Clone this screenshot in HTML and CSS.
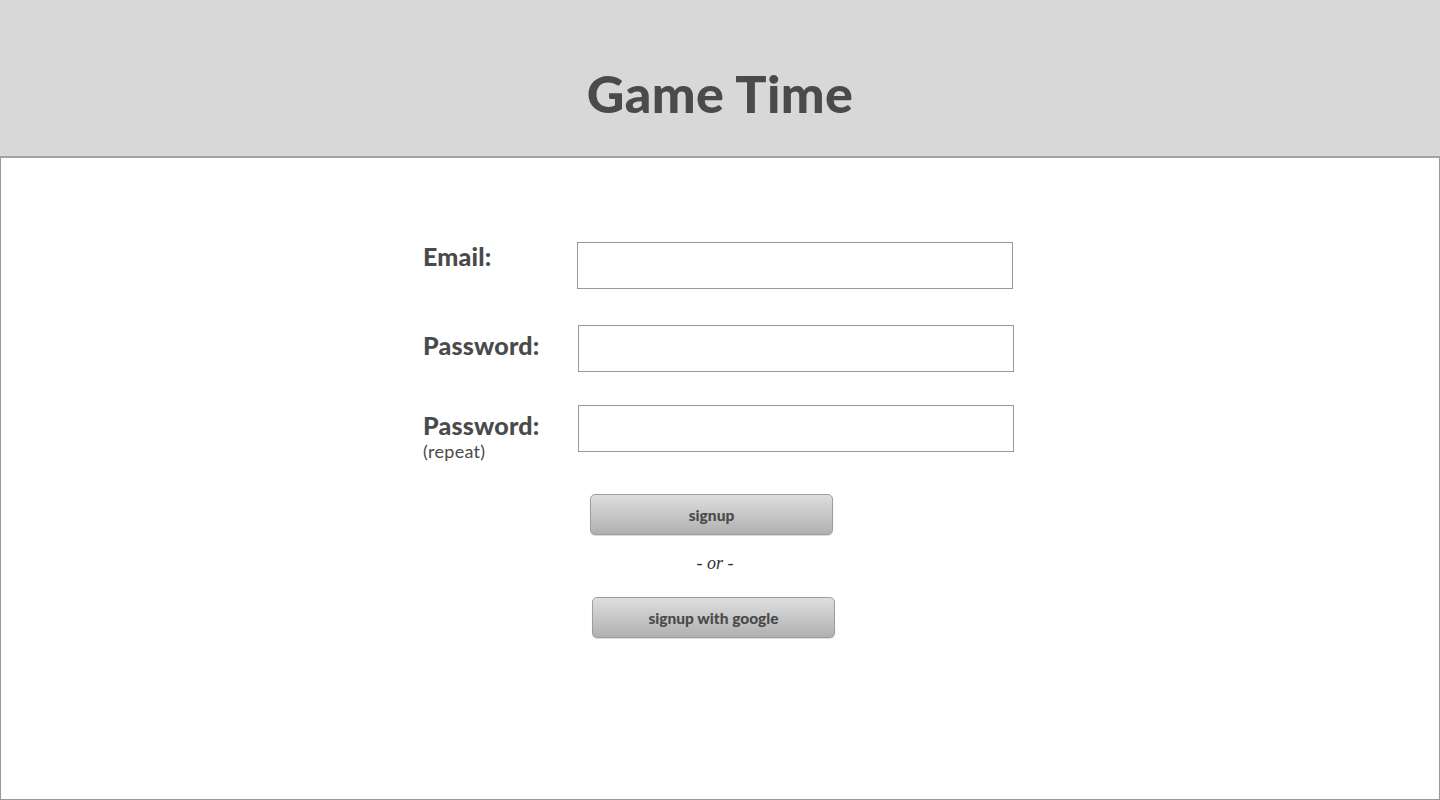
FILE: index.html
```html
<!DOCTYPE html>
<html>
<head>
<meta charset="utf-8">
<title>Game Time</title>
<link rel="stylesheet" href="styles.css">
</head>
<body>
<header class="header">
  <h1 class="title">Game Time</h1>
</header>
<main class="main">
  <form class="form">
    <div class="row row-email">
      <label class="label">Email:</label>
      <input class="field field-email" type="text">
    </div>
    <div class="row row-pass">
      <label class="label">Password:</label>
      <input class="field" type="password">
    </div>
    <div class="row row-repeat">
      <label class="label">Password:<span class="sub">(repeat)</span></label>
      <input class="field" type="password">
    </div>
    <div class="actions">
      <button type="button" class="btn btn-signup">signup</button>
      <div class="or">- or -</div>
      <button type="button" class="btn btn-google">signup with google</button>
    </div>
  </form>
</main>
</body>
</html>
```
FILE: styles.css
```css
html, body {
  margin: 0;
  padding: 0;
  background: #fff;
}
body {
  font-family: Lato, "Noto Sans", sans-serif;
  color: #4a4a4a;
}
.header {
  background: #d8d8d8;
  border-bottom: 2px solid #a3a3a3;
  display: flex;
  align-items: center;
  justify-content: center;
  box-sizing: border-box;
  height: 158px;
  padding-top: 30px;
}
.title {
  margin: 0;
  font-size: 52px;
  font-weight: 900;
  color: #4a4a4a;
  letter-spacing: 0.4px;
}
.main {
  height: 642px;
  box-sizing: border-box;
  border: 1px solid #999;
  border-top: none;
  padding-top: 84px;
}
.form {
  width: 594px;
  margin: 0 auto;
}
.row {
  display: flex;
  align-items: flex-start;
}
.label {
  width: 155px;
  font-size: 25px;
  font-weight: 900;
  color: #4a4a4a;
  display: flex;
  flex-direction: column;
  line-height: 28px;
  letter-spacing: 0.2px;
}
.row-email .label { padding-top: 0; width: 154px; }
.row-pass { margin-top: 36px; }
.row-pass .label { padding-top: 6px; }
.row-repeat { margin-top: 33px; }
.row-repeat .label { padding-top: 6px; }
.sub {
  font-size: 18px;
  font-weight: 400;
  line-height: 20px;
  margin-top: 2px;
  letter-spacing: 0.3px;
  color: #4a4a4a;
}
.field {
  width: 436px;
  height: 47px;
  box-sizing: border-box;
  border: 1px solid #999;
  background: #fff;
  margin: 0;
  padding: 0 8px;
  font-size: 16px;
  outline: none;
}
.actions {
  margin-top: 33px;
  display: flex;
  flex-direction: column;
  align-items: flex-start;
}
.btn {
  width: 243px;
  height: 41px;
  border: 1px solid #9d9d9d;
  border-radius: 5px;
  background: linear-gradient(#dedede, #b0b0b0);
  box-shadow: 0 1px 1px rgba(0,0,0,0.15);
  font-family: Lato, "Noto Sans", sans-serif;
  font-weight: 900;
  font-size: 15.5px;
  color: #4a4a4a;
  padding: 0;
  cursor: pointer;
}
.btn-signup { margin-left: 167px; }
.btn-google { margin-left: 169px; }
.or {
  align-self: flex-start;
  margin-left: 272px;
  margin-top: 17px;
  margin-bottom: 23px;
  font-family: "Liberation Serif", serif;
  font-style: italic;
  font-size: 18px;
  line-height: 22px;
  color: #333;
  width: 40px;
  text-align: center;
}
```
